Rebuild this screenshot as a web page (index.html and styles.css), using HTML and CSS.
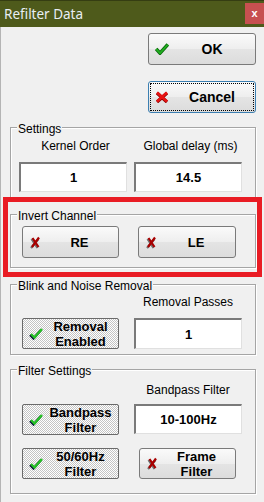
FILE: index.html
```html
<!DOCTYPE html>
<html lang="en">
<head>
    <meta charset="UTF-8">
    <title>Refilter Data</title>
    <link rel="stylesheet" href="styles.css">
</head>
<body>
    <div class="window">
        <div class="titlebar">
            <span class="title">Refilter Data</span>
            <span class="close">x</span>
        </div>

        <div class="content">
            <!-- OK / Cancel -->
            <div class="actions">
                <div class="btn wide">
                    <svg width="14" height="12" viewBox="0 0 14 12"><polyline points="1.2,6 5,10.2 12.8,1.5" fill="none" stroke="#0a6a0a" stroke-width="3.4"/><polyline points="1.2,6 5,10.2 12.8,1.5" fill="none" stroke="#22b022" stroke-width="1.8"/></svg>
                    <span class="label">OK</span>
                </div>
                <div class="btn wide focused">
                    <svg width="14" height="12" viewBox="0 0 14 12"><path d="M2 2 L12 11 M12 2 L2 11" stroke="#8a0000" stroke-width="3.4"/><path d="M2 1.5 L12 10.5 M12 1.5 L2 10.5" stroke="#e81212" stroke-width="2.6"/></svg>
                    <span class="label">Cancel</span>
                </div>
            </div>

            <!-- Settings -->
            <div class="group settings">
                <div class="group-title">Settings</div>
                <div class="grid">
                    <div class="field-label">Kernel Order</div>
                    <div class="field-label">Global delay (ms)</div>
                    <div class="value">1</div>
                    <div class="value">14.5</div>
                </div>
            </div>

            <!-- Invert Channel -->
            <div class="group invert">
                <div class="group-title">Invert Channel</div>
                <div class="row">
                    <div class="btn sm">
                        <svg width="12" height="13" viewBox="0 0 12 13"><path d="M2.5 3 L8.5 12 M9.5 3 L2 12" stroke="#707070" stroke-width="2.2"/><path d="M3.5 2 L9.5 11 M10 1.5 L3 11" stroke="#a80000" stroke-width="2.2"/></svg>
                        <span class="label">RE</span>
                    </div>
                    <div class="btn sm le">
                        <svg width="12" height="13" viewBox="0 0 12 13"><path d="M2.5 3 L8.5 12 M9.5 3 L2 12" stroke="#707070" stroke-width="2.2"/><path d="M3.5 2 L9.5 11 M10 1.5 L3 11" stroke="#a80000" stroke-width="2.2"/></svg>
                        <span class="label">LE</span>
                    </div>
                </div>
            </div>

            <!-- Blink and Noise Removal -->
            <div class="group blink">
                <div class="group-title">Blink and Noise Removal</div>
                <div class="pair">
                    <div></div>
                    <div class="field-label">Removal Passes</div>
                    <div class="btn sm on">
                        <svg width="14" height="13" viewBox="0 0 14 13"><polyline points="1,8 4.5,11.5 12,3" fill="none" stroke="#101a40" stroke-width="2.4"/><polyline points="2,7 5.5,10.5 13,2" fill="none" stroke="#24c024" stroke-width="2.4"/></svg>
                        <span class="label">Removal<br>Enabled</span>
                    </div>
                    <div class="value">1</div>
                </div>
            </div>

            <!-- Filter Settings -->
            <div class="group filters">
                <div class="group-title">Filter Settings</div>
                <div class="pair">
                    <div></div>
                    <div class="field-label">Bandpass Filter</div>
                    <div class="btn sm on">
                        <svg width="14" height="13" viewBox="0 0 14 13"><polyline points="1,8 4.5,11.5 12,3" fill="none" stroke="#101a40" stroke-width="2.4"/><polyline points="2,7 5.5,10.5 13,2" fill="none" stroke="#24c024" stroke-width="2.4"/></svg>
                        <span class="label">Bandpass<br>Filter</span>
                    </div>
                    <div class="value">10-100Hz</div>
                    <div class="btn sm on last-row">
                        <svg width="14" height="13" viewBox="0 0 14 13"><polyline points="1,8 4.5,11.5 12,3" fill="none" stroke="#101a40" stroke-width="2.4"/><polyline points="2,7 5.5,10.5 13,2" fill="none" stroke="#24c024" stroke-width="2.4"/></svg>
                        <span class="label">50/60Hz<br>Filter</span>
                    </div>
                    <div class="btn sm frame last-row">
                        <svg width="12" height="13" viewBox="0 0 12 13"><path d="M2.5 3 L8.5 12 M9.5 3 L2 12" stroke="#707070" stroke-width="2.2"/><path d="M3.5 2 L9.5 11 M10 1.5 L3 11" stroke="#a80000" stroke-width="2.2"/></svg>
                        <span class="label">Frame<br>Filter</span>
                    </div>
                </div>
            </div>
        </div>

        <!-- annotation box drawn over the Invert Channel group -->
        <div class="highlight"></div>
    </div>
</body>
</html>
```

FILE: styles.css
```css
body {
    margin: 0;
    background-color: #f0f0f0;
    font-family: "Liberation Sans", Arial, sans-serif;
    font-size: 12px;
    color: #000;
}

.window {
    position: relative;
    width: 264px;
    height: 502px;
    overflow: hidden;
}

.titlebar {
    height: 26px;
    border-top: 1px solid #353d12;
    background-color: #4e5a1b;
    display: flex;
    justify-content: space-between;
    align-items: flex-start;
}
.title {
    font-family: "Noto Sans", sans-serif;
    font-size: 13.5px;
    line-height: 26px;
    color: #e8eef4;
    padding-left: 4px;
}
.close {
    width: 19px;
    height: 21px;
    margin-top: 2px;
    background-color: #c75050;
    color: #fff;
    font-weight: bold;
    font-size: 11px;
    line-height: 21px;
    text-align: center;
}

.content {
    height: 475px;
    box-sizing: border-box;
    border-left: 1px solid #b4b4b4;
    padding-left: 9px;
}

/* buttons */
.actions {
    display: flex;
    flex-direction: column;
    align-items: flex-end;
    gap: 16px;
    padding: 6px 8px 0 0;
}
.btn {
    display: flex;
    align-items: center;
    box-sizing: border-box;
    height: 32px;
    padding-left: 6px;
    border: 1px solid #7a7a7a;
    border-radius: 3px;
    background: linear-gradient(#fafafa, #eeeeee 50%, #e4e4e4 51%, #dcdcdc);
    font-weight: bold;
    font-size: 13px;
}
.btn svg {
    flex: none;
}
.btn .label {
    flex: 1;
    text-align: center;
    line-height: 15px;
}
.btn.wide {
    width: 108px;
}
.btn.wide .label {
    font-size: 14px;
}
.btn.focused {
    border-color: #3c7fb1;
    outline: 1px dotted #000;
    outline-offset: -3px;
}
.btn.sm {
    width: 97px;
}
.btn.le {
    width: 98px;
}
.btn.on {
    height: 31px;
    border-color: #6a6a6a;
    border-radius: 2px;
    background: repeating-conic-gradient(#ffffff 0 25%, #c4c4c4 0 50%) 0 0 / 2px 2px;
}
.btn.frame {
    height: 31px;
    margin-left: 5px;
}

/* group boxes */
.group {
    width: 246px;
    box-sizing: border-box;
    border: 1px solid #a5a5a5;
    box-shadow: inset 1px 1px 0 #fff, 1px 1px 0 #fff;
}
.group-title {
    width: fit-content;
    margin: -6px 0 0 6px;
    padding: 0 1px;
    background-color: #f0f0f0;
    line-height: 14px;
}
.field-label {
    line-height: 14px;
    text-align: center;
}
.value {
    height: 30px;
    box-sizing: border-box;
    display: flex;
    align-items: center;
    justify-content: center;
    background-color: #fff;
    border-style: solid;
    border-width: 2px 1px 1px 2px;
    border-color: #7a7a7a #e0e0e0 #e0e0e0 #7a7a7a;
    font-weight: bold;
    font-size: 13px;
}

.settings {
    margin-top: 14px;
    padding-bottom: 5px;
}
.settings .grid {
    display: grid;
    grid-template-columns: 108px 108px;
    column-gap: 7px;
    row-gap: 9px;
    padding: 3px 0 0 8px;
}
.settings .field-label {
    padding-left: 5px;
}

.invert {
    margin-top: 16px;
    padding-bottom: 9px;
}
.invert .row {
    display: flex;
    gap: 19px;
    padding: 3px 0 0 11px;
}

.pair {
    display: grid;
    grid-template-columns: 97px 108px;
    column-gap: 15px;
    align-items: start;
}
.blink {
    margin-top: 16px;
    padding-bottom: 5px;
}
.blink .pair {
    padding: 2px 0 0 11px;
    row-gap: 9px;
}
.blink .value {
    height: 31px;
}
.filters {
    margin-top: 14px;
    padding-bottom: 14px;
}
.filters .pair {
    padding: 5px 0 0 11px;
    row-gap: 7px;
    grid-template-rows: 14px 31px 37px;
}
.filters .last-row {
    margin-top: 6px;
}

.highlight {
    position: absolute;
    left: 3px;
    top: 197px;
    width: 259px;
    height: 80px;
    box-sizing: border-box;
    border: 5px solid #e91c24;
}
```
